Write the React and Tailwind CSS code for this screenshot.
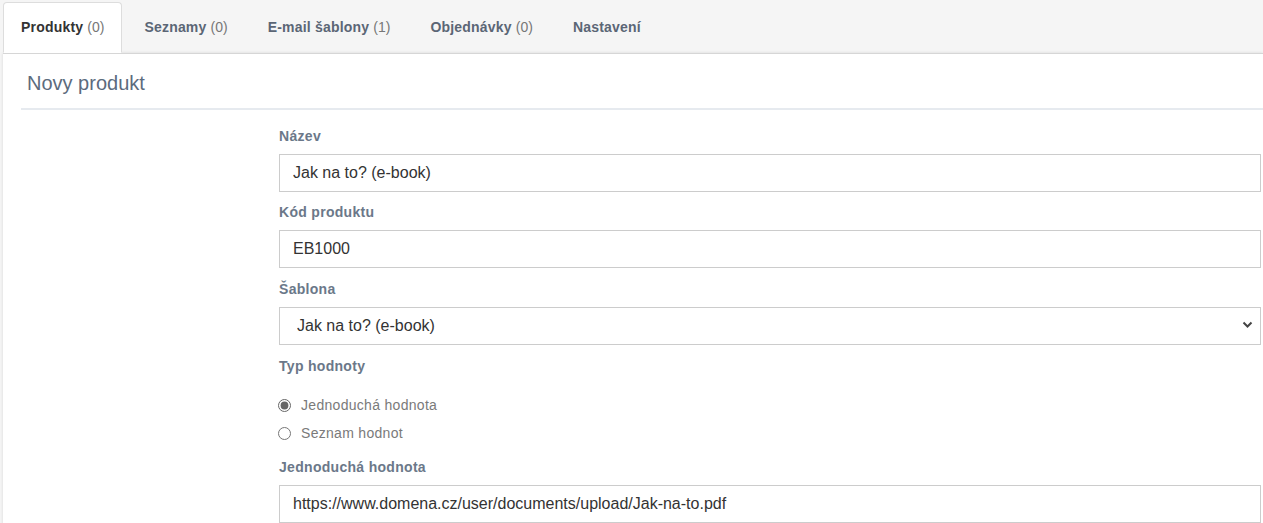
import { useState } from "react";

const tabs = [
  { name: "Produkty", count: "(0)" },
  { name: "Seznamy", count: "(0)" },
  { name: "E-mail šablony", count: "(1)" },
  { name: "Objednávky", count: "(0)" },
  { name: "Nastavení", count: null },
];

const Label = ({ children }) => (
  <label className="block text-[14px] font-bold tracking-[0.3px] text-[#6b7889] leading-[20px]">
    {children}
  </label>
);

const TextInput = ({ value }) => (
  <input
    type="text"
    defaultValue={value}
    className="block w-full h-[38px] px-[13px] text-[16px] text-[#333] border border-[#ccc] bg-white outline-none"
  />
);

export default function App() {
  const [active] = useState(0);
  const [type, setType] = useState("simple");

  return (
    <div className="min-h-[523px] bg-[#f5f5f5] font-['Liberation_Sans',Arial,sans-serif]">
      {/* tabs */}
      <div className="flex items-end h-[53px] pl-[3px] pt-[2px]">
        {tabs.map((tab, index) => (
          <div
            key={tab.name}
            className={`h-[51px] flex items-center px-[17px] mr-[4px] text-[14px] rounded-t-[4px] border ${
              index === active
                ? "bg-white border-[#ddd] border-b-white text-[#333] relative z-10"
                : "border-transparent text-[#5b6675]"
            }`}
          >
            <span className="font-bold tracking-[0.2px]">{tab.name}</span>
            {tab.count && (
              <span className="ml-[4px] text-[#777]">{tab.count}</span>
            )}
          </div>
        ))}
      </div>
      {/* panel */}
      <div className="ml-[3px] bg-white border-t border-[#d6d6d6] shadow-[0_0_3px_rgba(0,0,0,0.12)] pl-[18px] pb-[10px]">
        <div className="pl-[6px] h-[56px] flex items-center border-b-2 border-[#e6eaef]">
          <h2 className="text-[20px] text-[#5c6b7d] pt-[3px]">Novy produkt</h2>
        </div>
        <div className="ml-[258px] mr-[2px] pt-[16px]">
          <Label>Název</Label>
          <div className="mt-[8px]">
            <TextInput value="Jak na to? (e-book)" />
          </div>
          <div className="mt-[10px]">
            <Label>Kód produktu</Label>
          </div>
          <div className="mt-[8px]">
            <TextInput value="EB1000" />
          </div>
          <div className="mt-[11px]">
            <Label>Šablona</Label>
          </div>
          <div className="mt-[8px] relative">
            <select className="block w-full h-[38px] pl-[17px] text-[16px] text-[#333] border border-[#ccc] bg-white outline-none appearance-none">
              <option>Jak na to? (e-book)</option>
            </select>
            <svg
              className="absolute right-[8px] top-[14px] pointer-events-none"
              width="11"
              height="8"
              viewBox="0 0 11 8"
            >
              <path
                d="M1.5 1.5 L5.5 5.5 L9.5 1.5"
                stroke="#444"
                strokeWidth="2"
                fill="none"
              />
            </svg>
          </div>
          <div className="mt-[11px]">
            <Label>Typ hodnoty</Label>
          </div>
          <div className="mt-[19px] flex flex-col gap-[8px] text-[14px] tracking-[0.3px] text-[#7a7a7a]">
            <label className="flex items-center h-[20px]">
              <input
                type="radio"
                name="type"
                checked={type === "simple"}
                onChange={() => setType("simple")}
                className="w-[13px] h-[13px] ml-[-1px] mr-[10px] accent-[#666]"
              />
              Jednoduchá hodnota
            </label>
            <label className="flex items-center h-[20px]">
              <input
                type="radio"
                name="type"
                checked={type === "list"}
                onChange={() => setType("list")}
                className="w-[13px] h-[13px] ml-[-1px] mr-[10px] accent-[#666]"
              />
              Seznam hodnot
            </label>
          </div>
          <div className="mt-[14px]">
            <Label>Jednoduchá hodnota</Label>
          </div>
          <div className="mt-[8px]">
            <TextInput value="https://www.domena.cz/user/documents/upload/Jak-na-to.pdf" />
          </div>
        </div>
      </div>
    </div>
  );
}
